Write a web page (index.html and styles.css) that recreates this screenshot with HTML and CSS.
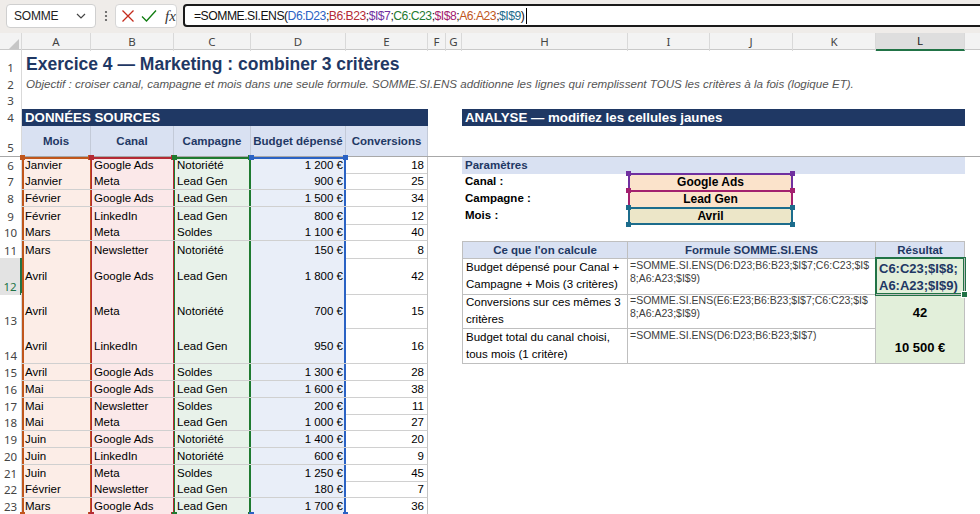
FILE: index.html
```html
<!DOCTYPE html>
<html lang="fr">
<head>
    <meta charset="UTF-8">
    <title>Exercice 4 — Marketing</title>
    <link rel="stylesheet" href="styles.css">
</head>
<body>

    <!-- Formula bar -->
    <div class="formula-bar">
        <div class="name-box">
            <span>SOMME</span>
            <svg width="10" height="6" viewBox="0 0 10 6"><polyline points="1,1 5,5 9,1" fill="none" stroke="#444" stroke-width="1.2"/></svg>
        </div>
        <div class="bar-dots">
            <svg width="4" height="14" viewBox="0 0 4 14"><circle cx="2" cy="3" r="1.1" fill="#555"/><circle cx="2" cy="7" r="1.1" fill="#555"/><circle cx="2" cy="11" r="1.1" fill="#555"/></svg>
        </div>
        <div class="bar-tools">
            <svg width="14" height="14" viewBox="0 0 14 14"><path d="M1.5 1.5 L12.5 12.5 M12.5 1.5 L1.5 12.5" stroke="#c42b1c" stroke-width="1.3" fill="none"/></svg>
            <svg width="16" height="14" viewBox="0 0 16 14"><path d="M1 7.5 L5.5 12 L15 1.5" stroke="#107c10" stroke-width="1.3" fill="none"/></svg>
            <span class="fx">fx</span>
        </div>
        <div class="formula-input">
            <span>=SOMME.SI.ENS(</span><span class="ref-d">D6:D23</span>;<span class="ref-b">B6:B23</span>;<span class="ref-i7">$I$7</span>;<span class="ref-c">C6:C23</span>;<span class="ref-i8">$I$8</span>;<span class="ref-a">A6:A23</span>;<span class="ref-i9">$I$9</span>)<span class="caret"></span>
        </div>
    </div>

    <!-- Sheet -->
    <div class="sheet">
        <div class="row col-heads">
            <div class="corner"><svg width="10" height="10" viewBox="0 0 10 10"><polygon points="10,0 10,10 0,10" fill="#c6c6c6"/></svg></div>
            <div class="ch">A</div><div class="ch">B</div><div class="ch">C</div><div class="ch">D</div><div class="ch">E</div>
            <div class="ch">F</div><div class="ch">G</div><div class="ch">H</div><div class="ch">I</div><div class="ch">J</div>
            <div class="ch">K</div><div class="ch active">L</div><div class="ch last"></div>
        </div>

        <div class="row h26"><div class="rh">1</div><div class="title">Exercice 4 — Marketing : combiner 3 critères</div></div>
        <div class="row h17"><div class="rh">2</div><div class="subtitle">Objectif : croiser canal, campagne et mois dans une seule formule. SOMME.SI.ENS additionne les lignes qui remplissent TOUS les critères à la fois (logique ET).</div></div>
        <div class="row h16"><div class="rh">3</div></div>
        <div class="row h17">
            <div class="rh">4</div>
            <div class="section left">DONNÉES SOURCES</div>
            <div class="section right">ANALYSE — modifiez les cellules jaunes</div>
        </div>
        <div class="row h31 freeze">
            <div class="rh">5</div>
            <div class="hd-cell">Mois</div><div class="hd-cell">Canal</div><div class="hd-cell">Campagne</div><div class="hd-cell">Budget dépensé</div><div class="hd-cell">Conversions</div>
        </div>

        <div class="row h16">
            <div class="rh">6</div>
            <div class="c a first">Janvier<i class="hd tl"></i><i class="hd tr"></i></div>
            <div class="c b first">Google Ads<i class="hd tl"></i><i class="hd tr"></i></div>
            <div class="c k first">Notoriété<i class="hd tl"></i><i class="hd tr"></i></div>
            <div class="c d first num">1 200 €<i class="hd tl"></i><i class="hd tr"></i></div>
            <div class="c e num">18</div>
            <div class="param-head">Paramètres</div>
        </div>
        <div class="row h17">
            <div class="rh">7</div>
            <div class="c a">Janvier</div><div class="c b">Meta</div><div class="c k">Lead Gen</div><div class="c d num">900 €</div><div class="c e num">25</div>
            <div class="lbl">Canal :</div>
            <div class="inp inp-canal">Google Ads<i class="hd tl"></i><i class="hd tr"></i></div>
        </div>
        <div class="row h17">
            <div class="rh">8</div>
            <div class="c a">Février</div><div class="c b">Google Ads</div><div class="c k">Lead Gen</div><div class="c d num">1 500 €</div><div class="c e num">34</div>
            <div class="lbl">Campagne :</div>
            <div class="inp inp-camp">Lead Gen<i class="hd tl"></i><i class="hd tr"></i></div>
        </div>
        <div class="row h17">
            <div class="rh">9</div>
            <div class="c a">Février</div><div class="c b">LinkedIn</div><div class="c k">Lead Gen</div><div class="c d num">800 €</div><div class="c e num">12</div>
            <div class="lbl">Mois :</div>
            <div class="inp inp-mois">Avril<i class="hd tl"></i><i class="hd tr"></i><i class="hd bl"></i><i class="hd br"></i></div>
        </div>
        <div class="row h17">
            <div class="rh">10</div>
            <div class="c a">Mars</div><div class="c b">Meta</div><div class="c k">Soldes</div><div class="c d num">1 100 €</div><div class="c e num">40</div>
        </div>
        <div class="row h17">
            <div class="rh">11</div>
            <div class="c a">Mars</div><div class="c b">Newsletter</div><div class="c k">Notoriété</div><div class="c d num">150 €</div><div class="c e num">8</div>
            <div class="th th-h">Ce que l'on calcule</div>
            <div class="th th-f">Formule SOMME.SI.ENS</div>
            <div class="th th-r">Résultat</div>
        </div>
        <div class="row h35">
            <div class="rh current">12</div>
            <div class="c a">Avril</div><div class="c b">Google Ads</div><div class="c k">Lead Gen</div><div class="c d num">1 800 €</div><div class="c e num">42</div>
            <div class="td td-h">Budget dépensé pour Canal + Campagne + Mois (3 critères)</div>
            <div class="td td-f">=SOMME.SI.ENS(D6:D23;B6:B23;$I$7;C6:C23;$I$<br>8;A6:A23;$I$9)</div>
            <div class="td td-r editing">C6:C23;$I$8;<br>A6:A23;$I$9)<i class="fill-handle"></i></div>
        </div>
        <div class="row h35">
            <div class="rh">13</div>
            <div class="c a">Avril</div><div class="c b">Meta</div><div class="c k">Notoriété</div><div class="c d num">700 €</div><div class="c e num">15</div>
            <div class="td td-h">Conversions sur ces mêmes 3 critères</div>
            <div class="td td-f">=SOMME.SI.ENS(E6:E23;B6:B23;$I$7;C6:C23;$I$<br>8;A6:A23;$I$9)</div>
            <div class="td td-r">42</div>
        </div>
        <div class="row h36">
            <div class="rh">14</div>
            <div class="c a">Avril</div><div class="c b">LinkedIn</div><div class="c k">Lead Gen</div><div class="c d num">950 €</div><div class="c e num">16</div>
            <div class="td td-h">Budget total du canal choisi, tous mois (1 critère)</div>
            <div class="td td-f">=SOMME.SI.ENS(D6:D23;B6:B23;$I$7)</div>
            <div class="td td-r">10 500 €</div>
        </div>
        <div class="row h17">
            <div class="rh">15</div>
            <div class="c a">Avril</div><div class="c b">Google Ads</div><div class="c k">Soldes</div><div class="c d num">1 300 €</div><div class="c e num">28</div>
        </div>
        <div class="row h17">
            <div class="rh">16</div>
            <div class="c a">Mai</div><div class="c b">Google Ads</div><div class="c k">Lead Gen</div><div class="c d num">1 600 €</div><div class="c e num">38</div>
        </div>
        <div class="row h16">
            <div class="rh">17</div>
            <div class="c a">Mai</div><div class="c b">Newsletter</div><div class="c k">Soldes</div><div class="c d num">200 €</div><div class="c e num">11</div>
        </div>
        <div class="row h17">
            <div class="rh">18</div>
            <div class="c a">Mai</div><div class="c b">Meta</div><div class="c k">Lead Gen</div><div class="c d num">1 000 €</div><div class="c e num">27</div>
        </div>
        <div class="row h17">
            <div class="rh">19</div>
            <div class="c a">Juin</div><div class="c b">Google Ads</div><div class="c k">Notoriété</div><div class="c d num">1 400 €</div><div class="c e num">20</div>
        </div>
        <div class="row h17">
            <div class="rh">20</div>
            <div class="c a">Juin</div><div class="c b">LinkedIn</div><div class="c k">Notoriété</div><div class="c d num">600 €</div><div class="c e num">9</div>
        </div>
        <div class="row h16">
            <div class="rh">21</div>
            <div class="c a">Juin</div><div class="c b">Meta</div><div class="c k">Soldes</div><div class="c d num">1 250 €</div><div class="c e num">45</div>
        </div>
        <div class="row h17">
            <div class="rh">22</div>
            <div class="c a">Février</div><div class="c b">Newsletter</div><div class="c k">Lead Gen</div><div class="c d num">180 €</div><div class="c e num">7</div>
        </div>
        <div class="row h16">
            <div class="rh">23</div>
            <div class="c a">Mars<i class="hd bl"></i><i class="hd br"></i></div>
            <div class="c b">Google Ads<i class="hd bl"></i><i class="hd br"></i></div>
            <div class="c k">Lead Gen<i class="hd bl"></i><i class="hd br"></i></div>
            <div class="c d num">1 700 €<i class="hd bl"></i><i class="hd br"></i></div>
            <div class="c e num">36</div>
        </div>
    </div>

</body>
</html>
```

FILE: styles.css
```css
/* General */
:root {
    --navy: #1f3864;
    --head-blue: #d9e1f2;
    --grid: #d0d0d0;
    --ref-a: #c0561c;
    --ref-b: #b42a35;
    --ref-c: #1e7a30;
    --ref-d: #2a62c4;
    --ref-i7: #7030a0;
    --ref-i8: #a3206f;
    --ref-i9: #1c6c8c;
    --excel-green: #217346;
}

body {
    margin: 0;
    width: 980px;
    height: 514px;
    overflow: hidden;
    background: #fff;
    font-family: "Liberation Sans", Arial, sans-serif;
    font-size: 11.5px;
    color: #000;
}

/* Formula bar */
.formula-bar {
    height: 33px;
    box-sizing: border-box;
    background: #efece9;
    display: flex;
    align-items: flex-start;
    padding: 4px 0 0 6px;
}

.name-box {
    width: 90px;
    height: 24px;
    box-sizing: border-box;
    background: #fff;
    border: 1px solid #cfcfcf;
    border-radius: 4px;
    display: flex;
    align-items: center;
    justify-content: space-between;
    padding: 0 9px 0 7px;
    font-size: 12px;
    letter-spacing: -0.2px;
    color: #222;
}

.bar-dots {
    width: 19px;
    height: 24px;
    display: flex;
    align-items: center;
    justify-content: center;
}

.bar-tools {
    width: 62px;
    height: 24px;
    box-sizing: border-box;
    background: #fff;
    border: 1px solid #d6d6d6;
    border-radius: 4px;
    display: flex;
    align-items: center;
    gap: 6px;
    padding-left: 5px;
}

.fx {
    font-family: "Liberation Serif", serif;
    font-style: italic;
    font-size: 15px;
    color: #333;
    margin-left: 2px;
}

.formula-input {
    flex: 1;
    height: 23px;
    margin-left: 6px;
    margin-right: -8px;
    box-sizing: border-box;
    background: #fff;
    border: 2px solid #1a1a1a;
    border-radius: 4px;
    display: flex;
    align-items: center;
    padding-left: 9px;
    font-size: 12.2px;
    letter-spacing: -0.5px;
    color: #111;
    white-space: nowrap;
}

.ref-a { color: var(--ref-a); }
.ref-b { color: var(--ref-b); }
.ref-c { color: var(--ref-c); }
.ref-d { color: var(--ref-d); }
.ref-i7 { color: var(--ref-i7); }
.ref-i8 { color: var(--ref-i8); }
.ref-i9 { color: var(--ref-i9); }

.caret {
    display: inline-block;
    width: 1px;
    height: 16px;
    background: #000;
    margin-left: 2px;
}

/* Sheet grid */
.row {
    display: grid;
    grid-template-columns: 22px 69px 83px 77px 95px 82px 18px 16px 166px 82px 83px 83px 89px 1fr;
    box-sizing: border-box;
}

.h16 { height: 16px; }
.h17 { height: 17px; }
.h26 { height: 26px; }
.h31 { height: 31px; }
.h35 { height: 35px; }
.h36 { height: 36px; }

.col-heads {
    height: 17px;
    background: #f3f3f3;
    border-bottom: 1px solid #c9c9c9;
    font-family: "Noto Sans", "Open Sans", sans-serif;
    font-size: 11.5px;
    color: #444;
}

.corner {
    border-right: 1px solid #d9d9d9;
    display: flex;
    align-items: flex-end;
    justify-content: flex-end;
    padding: 0 2px 2px 0;
}

.ch {
    border-right: 1px solid #d9d9d9;
    display: flex;
    align-items: center;
    justify-content: center;
    line-height: 16px;
}

.ch.active {
    background: #dedede;
    border-bottom: 2px solid var(--excel-green);
    color: #222;
}

.ch.last { border-right: none; }

.rh {
    border-right: 1px solid #d9d9d9;
    display: flex;
    align-items: flex-end;
    justify-content: center;
    font-family: "Noto Sans", "Open Sans", sans-serif;
    font-size: 11.5px;
    line-height: 16px;
    color: #444;
}

.rh.current {
    background: #e3e3e3;
    color: var(--excel-green);
    border-right: 2px solid var(--excel-green);
}

.freeze {
    border-bottom: 1px solid #a8a8a8;
}

/* Titles */
.title {
    grid-column: 2 / -1;
    font-size: 17.5px;
    font-weight: bold;
    color: var(--navy);
    padding: 4px 0 0 4px;
    white-space: nowrap;
}

.subtitle {
    grid-column: 2 / -1;
    font-style: italic;
    font-size: 11.6px;
    color: #555;
    padding: 1px 0 0 4px;
    white-space: nowrap;
}

.section {
    background: var(--navy);
    color: #fff;
    font-size: 13.3px;
    font-weight: bold;
    padding-left: 3px;
    line-height: 17px;
    white-space: nowrap;
}

.section.left { grid-column: 2 / 7; }
.section.right { grid-column: 9 / 14; }

.hd-cell {
    background: var(--head-blue);
    border-right: 1px solid #c3cad8;
    display: flex;
    align-items: center;
    justify-content: center;
    font-weight: bold;
    color: var(--navy);
}

/* Source data */
.c {
    position: relative;
    border-bottom: 1px solid var(--grid);
    padding: 0 3px;
    line-height: 16px;
    display: flex;
    align-items: center;
    white-space: nowrap;
}

.c.num { justify-content: flex-end; }

.c.a { background: #fcede7; box-shadow: inset 2px 0 var(--ref-a), inset -1px 0 var(--ref-a); }
.c.b { background: #fbe8e9; box-shadow: inset 1px 0 var(--ref-b), inset -1px 0 var(--ref-b); }
.c.k { background: #e8f2ea; box-shadow: inset 1px 0 var(--ref-c), inset -2px 0 var(--ref-c); }
.c.d { background: #e9eef8; box-shadow: inset -2px 0 var(--ref-d); }
.c.e { border-right: 1px solid #c4c4c4; }

.c.a.first { box-shadow: inset 2px 0 var(--ref-a), inset -1px 0 var(--ref-a), inset 0 2px var(--ref-a); }
.c.b.first { box-shadow: inset 1px 0 var(--ref-b), inset -1px 0 var(--ref-b), inset 0 2px var(--ref-b); }
.c.k.first { box-shadow: inset 1px 0 var(--ref-c), inset -2px 0 var(--ref-c), inset 0 2px var(--ref-c); }
.c.d.first { box-shadow: inset -2px 0 var(--ref-d), inset 0 2px var(--ref-d); }

/* Range handles */
.hd {
    position: absolute;
    width: 5px;
    height: 5px;
}

.hd.tl { left: -2px; top: -2px; }
.hd.tr { right: -2px; top: -2px; }
.hd.bl { left: -2px; bottom: -3px; }
.hd.br { right: -2px; bottom: -3px; }

.a .hd { background: var(--ref-a); }
.b .hd { background: var(--ref-b); }
.k .hd { background: var(--ref-c); }
.d .hd { background: var(--ref-d); }

/* Analysis: parameters */
.param-head {
    grid-column: 9 / 14;
    background: var(--head-blue);
    color: var(--navy);
    font-weight: bold;
    padding-left: 3px;
    line-height: 16px;
}

.lbl {
    grid-column: 9;
    font-weight: bold;
    padding-left: 3px;
    line-height: 17px;
}

.inp {
    grid-column: 10 / 12;
    position: relative;
    box-sizing: border-box;
    text-align: center;
    font-weight: bold;
    font-size: 12px;
    line-height: 14px;
}

.inp-canal { background: #fbe3cb; border: 2px solid var(--ref-i7); border-bottom: none; }
.inp-camp { background: #fbe3cb; border: 2px solid var(--ref-i8); border-bottom: none; }
.inp-mois { background: #ece6c8; border: 2px solid var(--ref-i9); }

.inp .hd.tl { left: -4px; top: -4px; }
.inp .hd.tr { right: -4px; top: -4px; }
.inp .hd.bl { left: -4px; bottom: -4px; }
.inp .hd.br { right: -4px; bottom: -4px; }

.inp-canal .hd { background: var(--ref-i7); }
.inp-camp .hd { background: var(--ref-i8); }
.inp-mois .hd { background: var(--ref-i9); }

/* Analysis: table */
.th, .td {
    border-right: 1px solid #bfbfbf;
    border-bottom: 1px solid #bfbfbf;
}

.th {
    background: var(--head-blue);
    color: var(--navy);
    font-weight: bold;
    text-align: center;
    line-height: 16px;
    border-top: 1px solid #bfbfbf;
}

.th-h, .td-h { grid-column: 9; border-left: 1px solid #bfbfbf; }
.th-f, .td-f { grid-column: 10 / 13; }
.th-r, .td-r { grid-column: 13; }

.td-h {
    padding: 1px 3px 0;
    line-height: 17px;
}

.td-f {
    font-size: 10.5px;
    line-height: 13px;
    color: #404040;
    padding: 1px 2px 0;
    white-space: nowrap;
}

.td-r {
    background: #e2efda;
    font-weight: bold;
    font-size: 13px;
    display: flex;
    align-items: flex-end;
    justify-content: center;
    padding-bottom: 7px;
    line-height: 16px;
}

.td-r.editing {
    position: relative;
    display: block;
    padding: 2px 0 0 3px;
    line-height: 17px;
    color: var(--navy);
    box-shadow: 0 0 0 1px var(--excel-green), inset 0 0 0 1px var(--excel-green);
}

.fill-handle {
    position: absolute;
    right: -4px;
    bottom: -4px;
    width: 5px;
    height: 5px;
    background: var(--excel-green);
    border: 1px solid #fff;
}
```
